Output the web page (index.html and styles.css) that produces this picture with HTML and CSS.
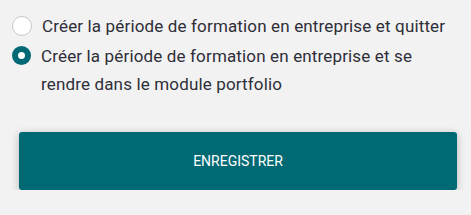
FILE: index.html
```html
<!DOCTYPE html>
<html lang="fr">
<head>
<meta charset="utf-8">
<link rel="stylesheet" href="styles.css">
</head>
<body>
<div class="panel">
  <div class="options">
    <label class="option">
      <span class="radio"></span>
      <span class="label">Créer la période de formation en entreprise et quitter</span>
    </label>
    <label class="option">
      <span class="radio checked"></span>
      <span class="label">Créer la période de formation en entreprise et se rendre dans le module portfolio</span>
    </label>
  </div>
  <button class="save">ENREGISTRER</button>
</div>
</body>
</html>
```
FILE: styles.css
```css
html, body {
  margin: 0;
  padding: 0;
  background: #f2f2f2;
}
body {
  font-family: Roboto, "Liberation Sans", sans-serif;
  color: #2e2e38;
}
.panel {
  padding: 12px 0 0 12px;
  width: 440px;
}
.options {
  display: flex;
  flex-direction: column;
  gap: 2px;
}
.option {
  display: flex;
  align-items: flex-start;
  gap: 10px;
}
.radio {
  flex: none;
  width: 18px;
  height: 18px;
  border: 1px solid #c4c7cc;
  border-radius: 50%;
  background: #fff;
  margin-top: 4px;
  box-sizing: content-box;
}
.radio.checked {
  width: 7px;
  height: 7px;
  border: 6.5px solid #006974;
  background: #fff;
}
.label {
  font-size: 17px;
  letter-spacing: 0.15px;
  line-height: 28px;
}
.save {
  display: block;
  margin: 34px 0 0 7px;
  width: 438px;
  height: 58px;
  border: none;
  border-radius: 3px;
  background: #006974;
  color: #fff;
  font-family: Roboto, "Liberation Sans", sans-serif;
  font-size: 14px;
  box-shadow: 0 2px 8px rgba(0,0,0,0.25);
}
```
